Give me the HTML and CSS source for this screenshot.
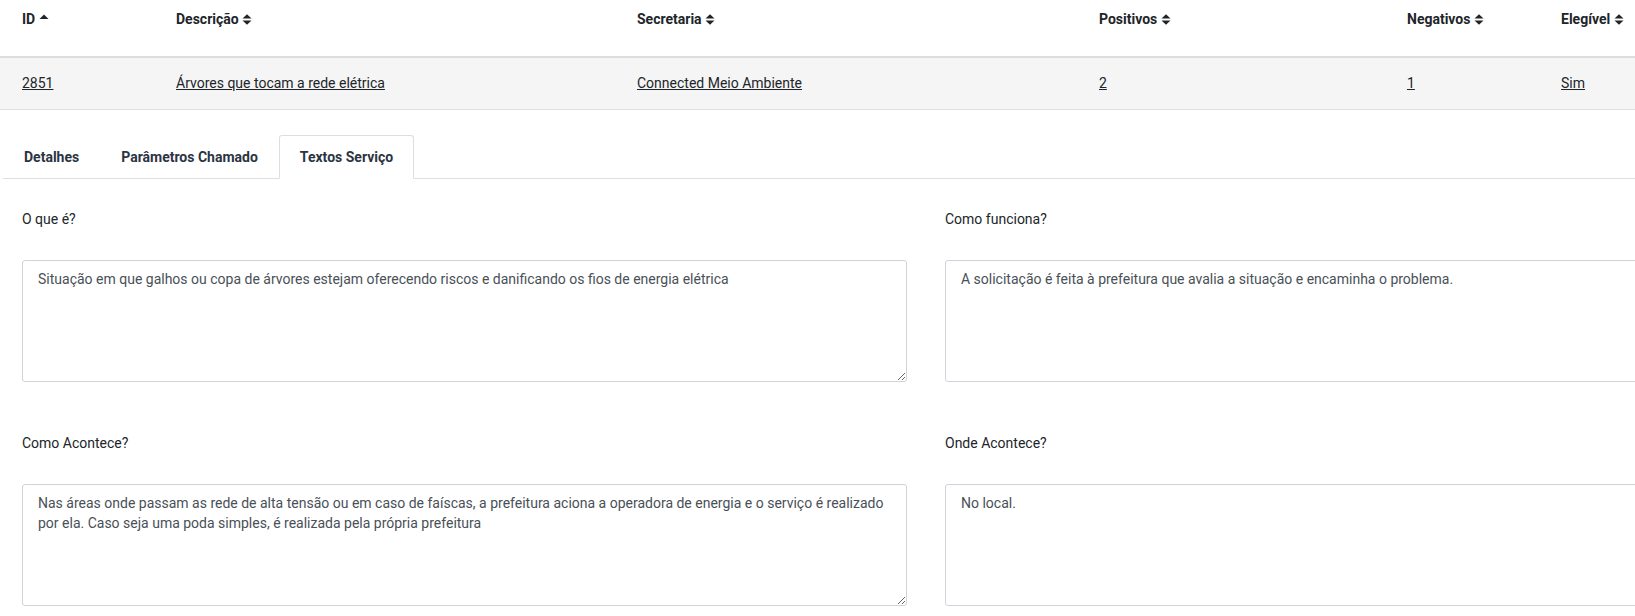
FILE: index.html
```html
<!DOCTYPE html>
<html lang="pt-BR">
<head>
<meta charset="utf-8">
<title>Textos Serviço</title>
<link rel="stylesheet" href="styles.css">
</head>
<body>
<table class="grid">
  <colgroup>
    <col class="c-id"><col class="c-desc"><col class="c-sec"><col class="c-pos"><col class="c-neg"><col class="c-ele">
  </colgroup>
  <thead>
    <tr>
      <th>ID <svg class="sort" width="10" height="11" viewBox="0 0 10 11"><path d="M0.5 5 L5 0.5 L9.5 5 Z" fill="#212529"/></svg></th>
      <th>Descrição <svg class="sort" width="10" height="11" viewBox="0 0 10 11"><path d="M0.5 4.6 L5 0.2 L9.5 4.6 Z M0.5 6.4 L5 10.8 L9.5 6.4 Z" fill="#212529"/></svg></th>
      <th>Secretaria <svg class="sort" width="10" height="11" viewBox="0 0 10 11"><path d="M0.5 4.6 L5 0.2 L9.5 4.6 Z M0.5 6.4 L5 10.8 L9.5 6.4 Z" fill="#212529"/></svg></th>
      <th>Positivos <svg class="sort" width="10" height="11" viewBox="0 0 10 11"><path d="M0.5 4.6 L5 0.2 L9.5 4.6 Z M0.5 6.4 L5 10.8 L9.5 6.4 Z" fill="#212529"/></svg></th>
      <th>Negativos <svg class="sort" width="10" height="11" viewBox="0 0 10 11"><path d="M0.5 4.6 L5 0.2 L9.5 4.6 Z M0.5 6.4 L5 10.8 L9.5 6.4 Z" fill="#212529"/></svg></th>
      <th>Elegível <svg class="sort" width="10" height="11" viewBox="0 0 10 11"><path d="M0.5 4.6 L5 0.2 L9.5 4.6 Z M0.5 6.4 L5 10.8 L9.5 6.4 Z" fill="#212529"/></svg></th>
    </tr>
  </thead>
  <tbody>
    <tr>
      <td><a href="#">2851</a></td>
      <td><a href="#">Árvores que tocam a rede elétrica</a></td>
      <td><a href="#">Connected Meio Ambiente</a></td>
      <td><a href="#">2</a></td>
      <td><a href="#">1</a></td>
      <td><a href="#">Sim</a></td>
    </tr>
  </tbody>
</table>

<ul class="tabs">
  <li class="tab">Detalhes</li>
  <li class="tab">Parâmetros Chamado</li>
  <li class="tab active">Textos Serviço</li>
</ul>

<div class="fields">
  <div class="field">
    <label class="lbl">O que é?</label>
    <textarea class="ta" readonly>Situação em que galhos ou copa de árvores estejam oferecendo riscos e danificando os fios de energia elétrica</textarea>
  </div>
  <div class="field">
    <label class="lbl">Como funciona?</label>
    <textarea class="ta" readonly>A solicitação é feita à prefeitura que avalia a situação e encaminha o problema.</textarea>
  </div>
  <div class="field">
    <label class="lbl">Como Acontece?</label>
    <textarea class="ta" readonly>Nas áreas onde passam as rede de alta tensão ou em caso de faíscas, a prefeitura aciona a operadora de energia e o serviço é realizado por ela. Caso seja uma poda simples, é realizada pela própria prefeitura</textarea>
  </div>
  <div class="field">
    <label class="lbl">Onde Acontece?</label>
    <textarea class="ta" readonly>No local.</textarea>
  </div>
</div>
</body>
</html>
```

FILE: styles.css
```css
html, body {
  margin: 0;
  padding: 0;
  overflow: hidden;
  background: #ffffff;
}
body {
  font-family: Roboto, "Liberation Sans", sans-serif;
  color: #212529;
  width: 1900px;
}

/* table */
.grid {
  border-collapse: collapse;
  table-layout: fixed;
  width: 1739px;
}
.c-id { width: 154px; }
.c-desc { width: 461px; }
.c-sec { width: 462px; }
.c-pos { width: 308px; }
.c-neg { width: 154px; }
.c-ele { width: 200px; }

.grid th {
  height: 57px;
  box-sizing: border-box;
  padding: 9px 0 0 22px;
  vertical-align: top;
  text-align: left;
  font-size: 14px;
  line-height: 20px;
  font-weight: 700;
  color: #212529;
  border-bottom: 2px solid #dedede;
  white-space: nowrap;
}
.sort {
  vertical-align: -1px;
  margin-left: 0;
}
.grid td {
  height: 52px;
  box-sizing: border-box;
  padding: 0 0 0 22px;
  vertical-align: middle;
  background: #f5f5f5;
  border-bottom: 1px solid #dedede;
  font-size: 14px;
  line-height: 20px;
  white-space: nowrap;
}
.grid td a {
  color: #212529;
  text-decoration: underline;
}

/* tabs */
.tabs {
  list-style: none;
  margin: 25px 0 0 3px;
  padding: 0;
  display: flex;
  border-bottom: 1px solid #dedede;
}
.tab {
  height: 42px;
  line-height: 42px;
  padding: 0 20px;
  border: 1px solid transparent;
  border-radius: 3px 3px 0 0;
  margin-bottom: -1px;
  font-size: 14px;
  font-weight: 700;
  color: #2b3442;
}
.tab.active {
  border-color: #dedede #dedede #ffffff;
  background: #ffffff;
}

/* fields */
.fields {
  display: grid;
  grid-template-columns: 885px 885px;
  column-gap: 38px;
  row-gap: 51px;
  padding: 30px 0 0 22px;
}
.field {
  display: flex;
  flex-direction: column;
}
.lbl {
  font-size: 14px;
  line-height: 20px;
  color: #212529;
  margin-bottom: 31px;
}
.ta {
  box-sizing: border-box;
  height: 122px;
  width: 100%;
  margin: 0;
  padding: 8px 15px;
  border: 1px solid #cfd3da;
  border-radius: 3px;
  font-family: Roboto, "Liberation Sans", sans-serif;
  font-size: 14px;
  line-height: 20px;
  color: #495057;
  background: #ffffff;
  outline: none;
}
```
